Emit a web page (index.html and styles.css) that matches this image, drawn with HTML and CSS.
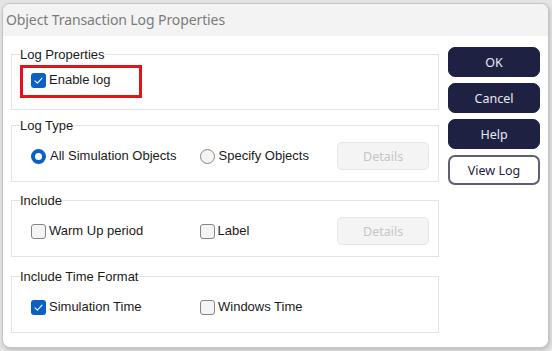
FILE: index.html
```html
<!DOCTYPE html>
<html>
<head>
<meta charset="utf-8">
<link rel="stylesheet" href="styles.css">
</head>
<body>
<div class="window">
  <div class="titlebar">Object Transaction Log Properties</div>
  <div class="content">
    <div class="groups">
      <fieldset class="group group-first">
        <legend>Log Properties</legend>
        <div class="row">
          <label class="opt highlight"><span class="box checked"><svg viewBox="0 0 15 15" width="15" height="15"><path d="M4 7.8 L6.4 10.1 L11 5.2" fill="none" stroke="#fff" stroke-width="1.1" stroke-linecap="round" stroke-linejoin="round"/></svg></span>Enable log</label>
        </div>
      </fieldset>
      <fieldset class="group g2">
        <legend>Log Type</legend>
        <div class="row">
          <label class="opt col1"><span class="radio checked"></span>All Simulation Objects</label>
          <label class="opt col2"><span class="radio"></span>Specify Objects</label>
          <button class="details" disabled>Details</button>
        </div>
      </fieldset>
      <fieldset class="group g3">
        <legend>Include</legend>
        <div class="row">
          <label class="opt col1"><span class="box"></span>Warm Up period</label>
          <label class="opt col2"><span class="box"></span>Label</label>
          <button class="details" disabled>Details</button>
        </div>
      </fieldset>
      <fieldset class="group g4">
        <legend>Include Time Format</legend>
        <div class="row">
          <label class="opt col1"><span class="box checked"><svg viewBox="0 0 15 15" width="15" height="15"><path d="M4 7.8 L6.4 10.1 L11 5.2" fill="none" stroke="#fff" stroke-width="1.1" stroke-linecap="round" stroke-linejoin="round"/></svg></span>Simulation Time</label>
          <label class="opt col2"><span class="box"></span>Windows Time</label>
        </div>
      </fieldset>
    </div>
    <div class="buttons">
      <button class="btn">OK</button>
      <button class="btn">Cancel</button>
      <button class="btn">Help</button>
      <button class="btn btn-outline">View Log</button>
    </div>
  </div>
</div>
</body>
</html>
```

FILE: styles.css
```css
html, body {
  margin: 0;
  padding: 0;
}
body {
  background: #e4e4e4;
  width: 552px;
  height: 351px;
  overflow: hidden;
  font-family: "Liberation Sans", Arial, sans-serif;
  font-size: 13px;
  color: #1a1a1a;
}
.window {
  box-sizing: border-box;
  margin: 3px 0 0 2px;
  width: 547px;
  height: 345px;
  background: #fff;
  border: 1px solid #c4c4c4;
  border-radius: 8px;
  overflow: hidden;
  box-shadow: 1px 2px 4px rgba(0,0,0,0.18);
}
.titlebar {
  height: 32px;
  line-height: 31px;
  background: #f3f3f3;
  padding-left: 3px;
  font-family: "Noto Sans", "Open Sans", sans-serif;
  font-size: 14px;
  color: #7b7b7b;
  letter-spacing: -0.1px;
}
.content {
  display: flex;
  gap: 9px;
  padding: 11px 0 0 8px;
}
.groups {
  width: 428px;
  display: flex;
  flex-direction: column;
}
.group {
  margin: 0;
  border: 1px solid #e3e3e3;
  padding: 9px 8px 11px 8px;
  min-width: 0;
}
.group legend {
  padding: 0;
  line-height: 15px;
  font-size: 13px;
}
.group-first {
  padding-top: 4px;
  padding-bottom: 15px;
}
.g2 { margin-top: 8px; }
.g3 { margin-top: 11px; }
.g4 { margin-top: 12px; }
.row {
  height: 28px;
  display: flex;
  align-items: center;
  padding-left: 11px;
}
.opt {
  display: flex;
  align-items: center;
  gap: 3px;
  line-height: 16px;
}
.col1 { width: 169px; }
.col2 { width: 138px; }
.highlight {
  position: relative;
}
.highlight::after {
  content: "";
  position: absolute;
  left: -11px;
  top: -7px;
  width: 116px;
  height: 27px;
  border: 3px solid #e3131c;
}
.box {
  box-sizing: border-box;
  width: 15px;
  height: 15px;
  border-radius: 3px;
  border: 1px solid #858585;
  background: #f4f4f4;
  display: block;
  flex: none;
}
.box.checked {
  border: none;
  background: #0c5fc4;
}
.box svg { display: block; }
.radio {
  box-sizing: border-box;
  width: 15px;
  height: 15px;
  border-radius: 50%;
  border: 1px solid #858585;
  background: #f4f4f4;
  flex: none;
  margin-right: 1px;
}
.radio.checked {
  border: 4.5px solid #0c5fc4;
  background: #fff;
}
.details {
  margin-left: auto;
  margin-right: 1px;
  width: 92px;
  height: 28px;
  box-sizing: border-box;
  border: 1px solid #e6e6e6;
  border-radius: 5px;
  background: #f4f4f4;
  color: #c6c6c6;
  font-family: "Noto Sans", "Open Sans", sans-serif;
  font-size: 12.5px;
  padding: 0;
}
.buttons {
  display: flex;
  flex-direction: column;
  gap: 6px;
}
.btn {
  box-sizing: border-box;
  width: 92px;
  height: 30px;
  border: 1px solid #1d2040;
  border-radius: 7px;
  background: #1e2142;
  color: #e8e9f2;
  font-family: "Noto Sans", "Open Sans", sans-serif;
  font-size: 12.5px;
  padding: 0;
}
.btn-outline {
  background: #fff;
  color: #1e2142;
  border: 2px solid #5d6073;
}
```
